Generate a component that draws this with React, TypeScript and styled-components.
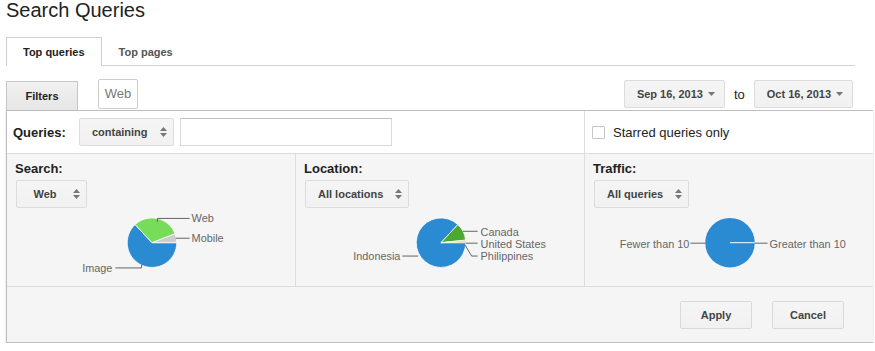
import React from "react";
import styled, { createGlobalStyle } from "styled-components";

const Global = createGlobalStyle`
  html, body { margin: 0; padding: 0; background: #fff; }
  body { font-family: "Liberation Sans", Arial, sans-serif; color: #222; }
`;

const Page = styled.div`
  padding-left: 6px;
  width: 869px;
`;

const Title = styled.h1`
  margin: 0 0 17px -6px;
  padding-left: 6px;
  font-size: 20px;
  line-height: 20px;
  font-weight: normal;
  color: #222;
`;

const TabBar = styled.div`
  display: flex;
  align-items: flex-start;
  box-sizing: border-box;
  width: 849px;
  height: 29px;
  border-bottom: 1px solid #cfcfcf;
`;

const Tab = styled.div<{ $active?: boolean }>`
  box-sizing: border-box;
  height: 29px;
  padding: 0 16px;
  line-height: 28px;
  font-size: 11px;
  font-weight: bold;
  color: ${(p) => (p.$active ? "#222" : "#555")};
  background: ${(p) => (p.$active ? "#fff" : "transparent")};
  border: 1px solid ${(p) => (p.$active ? "#cfcfcf" : "transparent")};
  border-bottom: none;
`;

const Toolbar = styled.div`
  display: flex;
  align-items: flex-start;
  width: 847px;
  height: 31px;
  margin-top: 13px;
`;

const FiltersButton = styled.div`
  box-sizing: border-box;
  width: 72px;
  height: 29px;
  margin-top: 2px;
  border: 1px solid #c6c6c6;
  border-bottom: none;
  background: linear-gradient(#f1f1f1, #e6e6e6);
  font-size: 11px;
  font-weight: bold;
  color: #222;
  text-align: center;
  line-height: 28px;
`;

const Chip = styled.div`
  box-sizing: border-box;
  width: 40px;
  height: 30px;
  margin-left: 20px;
  border: 1px solid #cccccc;
  border-radius: 2px;
  background: #fff;
  font-size: 13px;
  color: #777;
  text-align: center;
  line-height: 28px;
`;

const DateRange = styled.div`
  display: flex;
  align-items: center;
  margin-left: auto;
  margin-top: 1px;
  gap: 8px;
`;

const DateButton = styled.div`
  display: inline-flex;
  align-items: center;
  box-sizing: border-box;
  height: 28px;
  padding: 0 9px 0 12px;
  gap: 5px;
  background: linear-gradient(#f5f5f5, #f1f1f1);
  border: 1px solid #dcdcdc;
  border-radius: 2px;
  font-size: 11px;
  font-weight: bold;
  color: #444;
`;

const ToText = styled.span`
  font-size: 13px;
  color: #222;
  margin: 0 1px;
`;

const Panel = styled.div`
  box-sizing: border-box;
  width: 867px;
  border: 1px solid #bdbdbd;
  box-shadow: 0 2px 2px rgba(0, 0, 0, 0.18);
  display: grid;
  grid-template-columns: repeat(3, 1fr);
`;

const QueryCell = styled.div`
  grid-column: span 2;
  display: flex;
  align-items: center;
  height: 42px;
  padding-left: 6px;
  background: #fff;
  border-bottom: 1px solid #dddddd;
`;

const StarCell = styled.div`
  display: flex;
  align-items: center;
  height: 42px;
  padding-left: 7px;
  background: #fff;
  border-left: 1px solid #dddddd;
  border-bottom: 1px solid #dddddd;
  font-size: 13px;
  color: #222;
`;

const Label = styled.span`
  font-size: 13px;
  font-weight: bold;
  color: #222;
`;

const Select = styled.div<{ $width?: number; $ml?: number }>`
  display: inline-flex;
  align-items: center;
  box-sizing: border-box;
  height: 28px;
  ${(p) => (p.$width ? `width: ${p.$width}px;` : "")}
  margin-left: ${(p) => p.$ml ?? 0}px;
  padding: 0 6px 0 12px;
  gap: 12px;
  background: linear-gradient(#f5f5f5, #f1f1f1);
  border: 1px solid #dcdcdc;
  border-radius: 2px;
  font-size: 11px;
  font-weight: bold;
  color: #444;
`;

const SelectText = styled.span`
  flex: 1;
  text-align: center;
  white-space: nowrap;
`;

const TextInput = styled.div`
  box-sizing: border-box;
  width: 212px;
  height: 28px;
  margin-left: 6px;
  background: #fff;
  border: 1px solid #d9d9d9;
  border-top-color: #c0c0c0;
`;

const Checkbox = styled.span`
  box-sizing: border-box;
  width: 13px;
  height: 13px;
  margin-right: 8px;
  border: 1px solid #c6c6c6;
  border-radius: 1px;
  background: #fff;
`;

const Section = styled.div<{ $first?: boolean }>`
  display: flex;
  flex-direction: column;
  align-items: flex-start;
  padding: 7px 8px 0;
  height: 133px;
  box-sizing: border-box;
  background: #f5f5f5;
  border-left: ${(p) => (p.$first ? "none" : "1px solid #dddddd")};
  border-bottom: 1px solid #dddddd;
`;

const SectionTitle = styled.div`
  font-size: 13px;
  line-height: 15px;
  font-weight: bold;
  color: #222;
`;

const ChartBox = styled.svg`
  display: block;
  margin: 2px -8px 0;
  width: 288px;
  height: 77px;
  font-family: "Liberation Sans", Arial, sans-serif;
  font-size: 11px;
`;

const Footer = styled.div`
  grid-column: span 3;
  display: flex;
  justify-content: flex-end;
  gap: 20px;
  height: 55px;
  box-sizing: border-box;
  padding: 14px 29px 0 0;
  background: #f5f5f5;
`;

const ActionButton = styled.div`
  box-sizing: border-box;
  width: 72px;
  height: 28px;
  background: linear-gradient(#f5f5f5, #f1f1f1);
  border: 1px solid #d9d9d9;
  border-radius: 2px;
  font-size: 11px;
  font-weight: bold;
  color: #444;
  text-align: center;
  line-height: 26px;
`;

const UpDown = () => (
  <svg width="7" height="10" viewBox="0 0 7 10">
    <path d="M0 4 L3.5 0 L7 4 Z M0 6 L7 6 L3.5 10 Z" fill="#777" />
  </svg>
);

const DownArrow = () => (
  <svg width="7" height="4" viewBox="0 0 7 4">
    <path d="M0 0 L7 0 L3.5 4 Z" fill="#777" />
  </svg>
);

type Slice = { from: number; to: number; color: string };
type Leader = { points: string; text: string; x: number; y: number; anchor: "start" | "end" };

const CX = 145;
const CY = 33;
const R = 25;

function slicePath(a0: number, a1: number) {
  const r0 = (a0 * Math.PI) / 180;
  const r1 = (a1 * Math.PI) / 180;
  const x0 = CX + R * Math.cos(r0);
  const y0 = CY - R * Math.sin(r0);
  const x1 = CX + R * Math.cos(r1);
  const y1 = CY - R * Math.sin(r1);
  const large = a1 - a0 > 180 ? 1 : 0;
  return `M${CX} ${CY} L${x0.toFixed(2)} ${y0.toFixed(2)} A${R} ${R} 0 ${large} 0 ${x1.toFixed(2)} ${y1.toFixed(2)} Z`;
}

const Pie = ({ slices, leaders, full }: { slices: Slice[]; leaders: Leader[]; full?: string }) => (
  <ChartBox viewBox="0 0 288 77">
    {full && (
      <>
        <circle cx={CX} cy={CY} r={R} fill={full} />
        <line x1={CX} y1={CY} x2={CX + R} y2={CY} stroke="#fff" strokeWidth="1" />
      </>
    )}
    {slices.map((s, i) => (
      <path key={i} d={slicePath(s.from, s.to)} fill={s.color} stroke="#fff" strokeWidth="0.8" />
    ))}
    {leaders.map((l, i) => (
      <g key={i}>
        <polyline points={l.points} fill="none" stroke="#636363" strokeWidth="1" />
        <text x={l.x} y={l.y} textAnchor={l.anchor} fill="#666">
          {l.text}
        </text>
      </g>
    ))}
  </ChartBox>
);

const BLUE = "#2a8bd3";

const sections = [
  {
    title: "Search:",
    select: "Web",
    width: 71,
    slices: [
      { from: 133, to: 360, color: BLUE },
      { from: 21, to: 133, color: "#76dc5a" },
      { from: 0, to: 21, color: "#cccccc" },
    ],
    leaders: [
      { points: "150.5,12 150.5,8.5 183,8.5", text: "Web", x: 185, y: 12, anchor: "start" as const },
      { points: "169,28.5 183,28.5", text: "Mobile", x: 185, y: 32, anchor: "start" as const },
      { points: "134.5,55 134.5,58.5 108,58.5", text: "Image", x: 105, y: 63, anchor: "end" as const },
    ],
  },
  {
    title: "Location:",
    select: "All locations",
    slices: [
      { from: 47, to: 360, color: BLUE },
      { from: 6, to: 47, color: "#4ba92e" },
      { from: 2.5, to: 6, color: "#e59a2c" },
      { from: 0, to: 2.5, color: "#9c5a28" },
    ],
    leaders: [
      { points: "167,21.5 182,21.5", text: "Canada", x: 185, y: 26, anchor: "start" as const },
      { points: "170,33.5 182,33.5", text: "United States", x: 185, y: 38, anchor: "start" as const },
      { points: "169,35 176,46.5 182,46.5", text: "Philippines", x: 185, y: 50, anchor: "start" as const },
      { points: "122,46.5 106,46.5", text: "Indonesia", x: 104, y: 50, anchor: "end" as const },
    ],
  },
  {
    title: "Traffic:",
    select: "All queries",
    full: BLUE,
    slices: [],
    leaders: [
      { points: "120,33.5 105,33.5", text: "Fewer than 10", x: 104, y: 38, anchor: "end" as const },
      { points: "170,33.5 183,33.5", text: "Greater than 10", x: 185, y: 38, anchor: "start" as const },
    ],
  },
];

export default function App() {
  return (
    <Page>
      <Global />
      <Title>Search Queries</Title>
      <TabBar>
        <Tab $active>Top queries</Tab>
        <Tab>Top pages</Tab>
      </TabBar>
      <Toolbar>
        <FiltersButton>Filters</FiltersButton>
        <Chip>Web</Chip>
        <DateRange>
          <DateButton>
            Sep 16, 2013 <DownArrow />
          </DateButton>
          <ToText>to</ToText>
          <DateButton>
            Oct 16, 2013 <DownArrow />
          </DateButton>
        </DateRange>
      </Toolbar>
      <Panel>
        <QueryCell>
          <Label>Queries:</Label>
          <Select $ml={13} $width={95}>
            <SelectText>containing</SelectText>
            <UpDown />
          </Select>
          <TextInput />
        </QueryCell>
        <StarCell>
          <Checkbox />
          Starred queries only
        </StarCell>
        {sections.map((s, i) => (
          <Section key={s.title} $first={i === 0}>
            <SectionTitle>{s.title}</SectionTitle>
            <Select $ml={1} $width={s.width} style={{ marginTop: 4 }}>
              <SelectText>{s.select}</SelectText>
              <UpDown />
            </Select>
            <Pie slices={s.slices} leaders={s.leaders} full={s.full} />
          </Section>
        ))}
        <Footer>
          <ActionButton>Apply</ActionButton>
          <ActionButton>Cancel</ActionButton>
        </Footer>
      </Panel>
    </Page>
  );
}
